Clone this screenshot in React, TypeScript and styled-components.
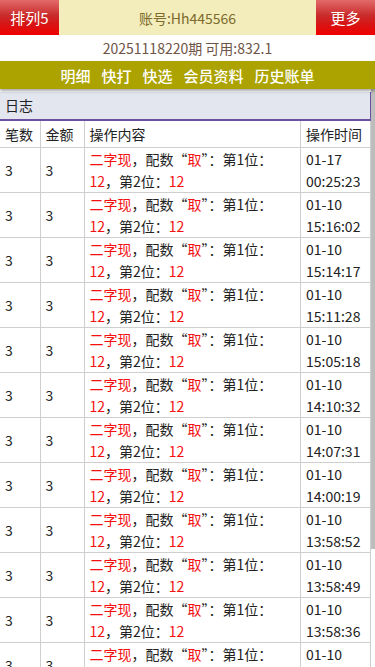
import styled, { createGlobalStyle } from "styled-components";

const GlobalStyle = createGlobalStyle`
    html, body {
        margin: 0;
        padding: 0;
        background: #fff;
        font-family: "Noto Sans CJK SC", "Noto Sans", sans-serif;
    }
`;

const Page = styled.div`
    display: flex;
    flex-direction: column;
    height: 100vh;
    overflow: hidden;
`;

const TopBar = styled.div`
    display: flex;
    height: 35px;
    background: #f2edbb;
`;

const RedButton = styled.div`
    width: 59px;
    display: flex;
    align-items: center;
    justify-content: center;
    color: #fff;
    font-size: 15px;
    background: linear-gradient(to bottom, #e36a6a 0%, #c92a2a 45%, #d81414 70%, #f00000 100%);
`;

const Account = styled.div`
    flex: 1;
    display: flex;
    align-items: center;
    justify-content: center;
    color: #7d6a2c;
    font-size: 14px;
`;

const Balance = styled.div`
    height: 26px;
    line-height: 26px;
    text-align: center;
    color: #6e5445;
    font-size: 14px;
`;

const Nav = styled.div`
    height: 28px;
    display: flex;
    align-items: center;
    justify-content: center;
    gap: 11px;
    background: #aca300;
    box-shadow: 0 2px 3px rgba(0, 0, 0, 0.35);
    position: relative;
    z-index: 1;
`;

const NavItem = styled.span`
    color: #fff;
    font-size: 15px;
    font-weight: 500;
`;

const Body = styled.div`
    flex: 1;
    position: relative;
    overflow: hidden;
`;

const Scroller = styled.div`
    height: 100%;
    overflow-y: auto;
    padding: 3px 4px 0 0;
    box-sizing: border-box;
    scrollbar-width: none;
    &::-webkit-scrollbar {
        display: none;
    }
`;

const Thumb = styled.div`
    position: absolute;
    top: 0;
    right: 0;
    width: 4px;
    height: 460px;
    background: #bdbdbd;
`;

const PanelHead = styled.div`
    height: 27px;
    line-height: 27px;
    padding-left: 5px;
    font-size: 14px;
    color: #222;
    background: #e3e6ef;
    border-bottom: 2px solid #6a4fa3;
    border-right: 1px solid #6a4fa3;
`;

const Table = styled.table`
    width: 100%;
    border-collapse: collapse;
    table-layout: fixed;
    font-size: 14px;
    color: #222;
`;

const Th = styled.th<{ $w?: number }>`
    box-sizing: border-box;
    width: ${p => (p.$w ? `${p.$w}px` : "auto")};
    height: 26px;
    padding: 0 5px;
    text-align: left;
    font-weight: 400;
    border: 1px solid #cfcfcf;
    border-top: none;
    &:first-child { border-left: none; }
`;

const Td = styled.td`
    height: 44px;
    padding: 0 5px;
    line-height: 22px;
    vertical-align: middle;
    border: 1px solid #cfcfcf;
    &:first-child { border-left: none; }
`;

const Red = styled.span`
    color: #f41010;
`;

const Line = styled.div`
    white-space: nowrap;
`;

const logs = [
    ["01-17", "00:25:23"],
    ["01-10", "15:16:02"],
    ["01-10", "15:14:17"],
    ["01-10", "15:11:28"],
    ["01-10", "15:05:18"],
    ["01-10", "14:10:32"],
    ["01-10", "14:07:31"],
    ["01-10", "14:00:19"],
    ["01-10", "13:58:52"],
    ["01-10", "13:58:49"],
    ["01-10", "13:58:36"],
    ["01-10", "13:58:21"],
    ["01-10", "13:58:07"],
];

export default function App() {
    return (
        <Page>
            <GlobalStyle />
            <TopBar>
                <RedButton>排列5</RedButton>
                <Account>账号:Hh445566</Account>
                <RedButton>更多</RedButton>
            </TopBar>
            <Balance>20251118220期 可用:832.1</Balance>
            <Nav>
                <NavItem>明细</NavItem>
                <NavItem>快打</NavItem>
                <NavItem>快选</NavItem>
                <NavItem>会员资料</NavItem>
                <NavItem>历史账单</NavItem>
            </Nav>
            <Body>
                <Scroller>
                    <PanelHead>日志</PanelHead>
                    <Table>
                        <thead>
                            <tr>
                                <Th $w={40}>笔数</Th>
                                <Th $w={44}>金额</Th>
                                <Th>操作内容</Th>
                                <Th $w={70}>操作时间</Th>
                            </tr>
                        </thead>
                        <tbody>
                            {logs.map(([d, t], i) => (
                                <tr key={i}>
                                    <Td>3</Td>
                                    <Td>3</Td>
                                    <Td>
                                        <Line><Red>二字现</Red>，配数“<Red>取</Red>”：第1位：</Line>
                                        <Line><Red>12</Red>，第2位：<Red>12</Red></Line>
                                    </Td>
                                    <Td>
                                        <Line>{d}</Line>
                                        <Line>{t}</Line>
                                    </Td>
                                </tr>
                            ))}
                        </tbody>
                    </Table>
                </Scroller>
                <Thumb />
            </Body>
        </Page>
    );
}
